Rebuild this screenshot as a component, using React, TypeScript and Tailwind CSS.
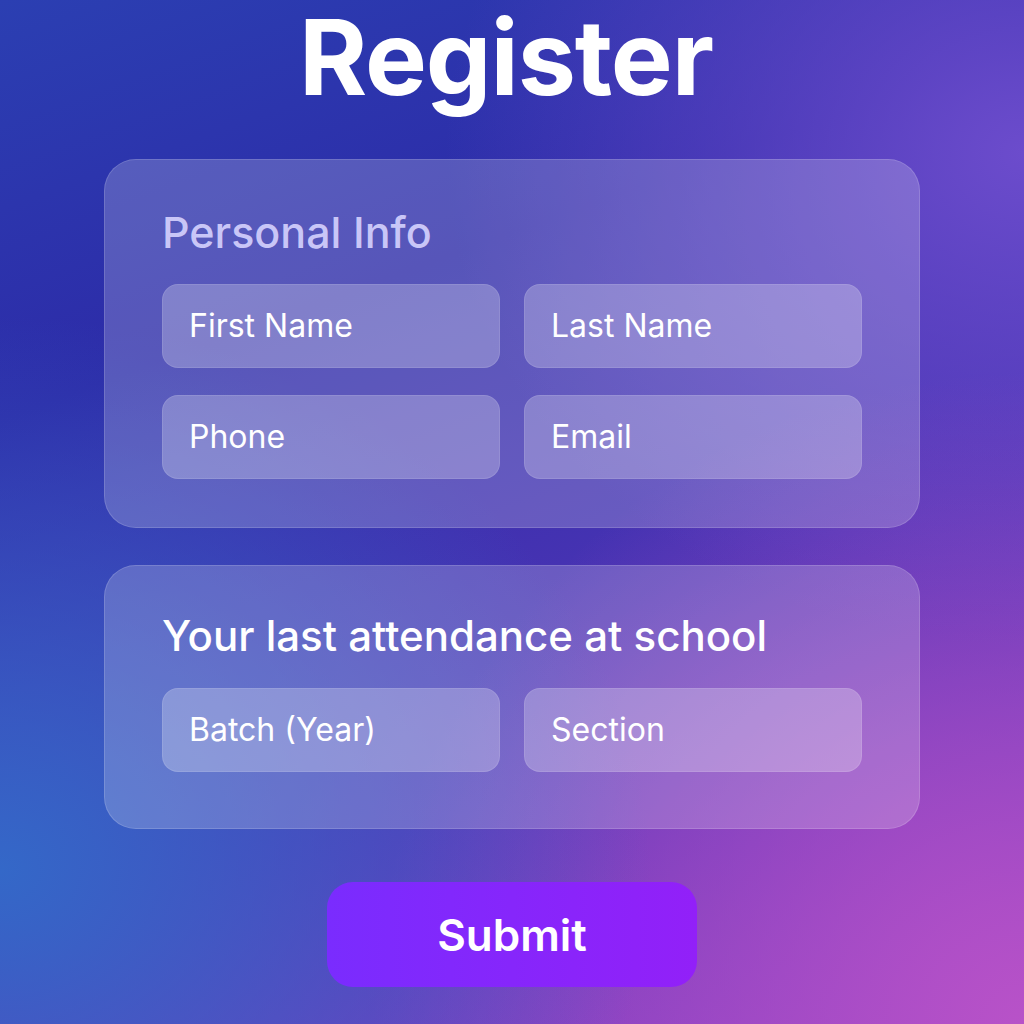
const Field = ({ label }: { label: string }) => (
  <div className="flex h-[84px] items-center rounded-[16px] border border-white/10 bg-white/25 pl-[26px] text-[32px] font-normal text-white">
    {label}
  </div>
);

const App = () => {
  return (
    <div
      className="relative flex h-[1024px] w-[1024px] flex-col items-center overflow-hidden bg-[radial-gradient(ellipse_at_0%_85%,#3468c8_0%,rgba(52,104,200,0)_45%),radial-gradient(ellipse_at_100%_100%,#b852c8_0%,rgba(184,82,200,0)_45%),radial-gradient(ellipse_at_100%_15%,#6c4ccc_0%,rgba(108,76,204,0)_40%),linear-gradient(160deg,#2b3fb2_0%,#2d2ba8_30%,#4a34b4_60%,#8a40c4_100%)] font-['Inter',sans-serif]"
    >
      <h1 className="mr-[12px] pb-[4px] pt-[5px] text-[104px] font-bold leading-[1] tracking-[-0.01em] text-white">
        Register
      </h1>

      <div className="mt-[46px] w-[816px] rounded-[32px] border border-white/15 bg-white/20 px-[57px] pb-[48px] pt-[51px]">
        <h2 className="text-[43px] font-medium leading-none text-[#c9c6f7]">
          Personal Info
        </h2>
        <div className="mt-[30px] grid grid-cols-2 gap-x-[24px] gap-y-[27px]">
          <Field label="First Name" />
          <Field label="Last Name" />
          <Field label="Phone" />
          <Field label="Email" />
        </div>
      </div>

      <div className="mt-[37px] w-[816px] rounded-[32px] border border-white/15 bg-white/20 px-[57px] pb-[56px] pt-[49px]">
        <h2 className="text-[42px] font-medium leading-none text-white">
          Your last attendance at school
        </h2>
        <div className="mt-[31px] grid grid-cols-2 gap-x-[24px]">
          <Field label="Batch (Year)" />
          <Field label="Section" />
        </div>
      </div>

      <button className="mt-[53px] flex h-[105px] w-[370px] items-center justify-center rounded-[26px] bg-[linear-gradient(90deg,#7a2cfe,#9220f8)] text-[44px] font-semibold text-white">
        Submit
      </button>
    </div>
  );
};

export default App;
